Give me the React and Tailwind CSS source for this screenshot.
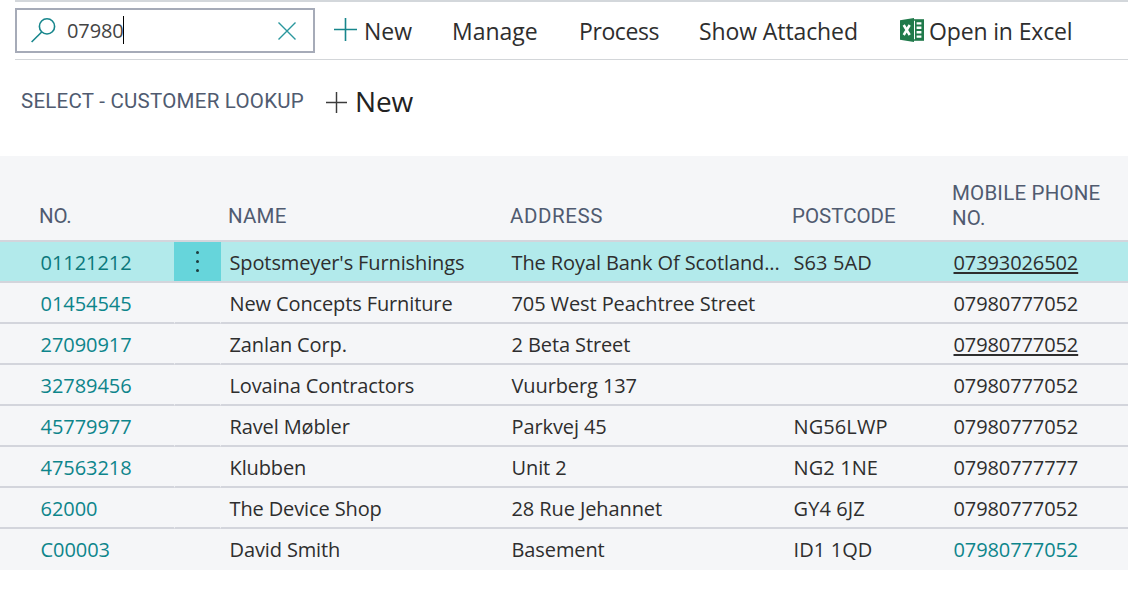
const columns = 'grid grid-cols-[174px_47px_282px_282px_160px_1fr]';

const customers = [
  { no: '01121212', name: "Spotsmeyer's Furnishings", address: 'The Royal Bank Of Scotland...', postcode: 'S63 5AD', phone: '07393026502', underline: true, selected: true },
  { no: '01454545', name: 'New Concepts Furniture', address: '705 West Peachtree Street', postcode: '', phone: '07980777052' },
  { no: '27090917', name: 'Zanlan Corp.', address: '2 Beta Street', postcode: '', phone: '07980777052', underline: true },
  { no: '32789456', name: 'Lovaina Contractors', address: 'Vuurberg 137', postcode: '', phone: '07980777052' },
  { no: '45779977', name: 'Ravel Møbler', address: 'Parkvej 45', postcode: 'NG56LWP', phone: '07980777052' },
  { no: '47563218', name: 'Klubben', address: 'Unit 2', postcode: 'NG2 1NE', phone: '07980777777' },
  { no: '62000', name: 'The Device Shop', address: '28 Rue Jehannet', postcode: 'GY4 6JZ', phone: '07980777052' },
  { no: 'C00003', name: 'David Smith', address: 'Basement', postcode: 'ID1 1QD', phone: '07980777052', link: true },
];

function PlusIcon({ className, size }) {
  return (
    <svg className={className} width={size} height={size} viewBox="0 0 23 23" fill="none" stroke="currentColor" strokeWidth="1.6">
      <path d="M11.5 0v23M0 11.5h23" />
    </svg>
  );
}

function SearchIcon() {
  return (
    <svg className="-mt-px shrink-0 text-[#17868c]" width="26" height="26" viewBox="0 0 26 26" fill="none" stroke="currentColor" strokeWidth="1.6">
      <circle cx="16" cy="9.4" r="7.6" />
      <path d="M10.7 15 0.6 25" />
    </svg>
  );
}

function ExcelIcon() {
  return (
    <svg className="shrink-0" width="24" height="24" viewBox="0 0 24 24">
      <path d="M13 1.2h11v21.6H13z" fill="#217a4b" />
      <path d="M0 2.3 14 0v24L0 21.7z" fill="#217a4b" />
      <path d="M14 2.8h1v18.4h-1z" fill="#fff" />
      <path d="M16.6 4.2h4.8v2.4h-4.8zM16.6 8.6h4.8V11h-4.8zM16.6 13.1h4.8v2.4h-4.8zM16.6 17.5h4.8v2.2h-4.8z" fill="#fff" />
      <path d="m3.7 7 6 10M9.7 7l-6 10" stroke="#fff" strokeWidth="2.5" fill="none" />
    </svg>
  );
}

function Toolbar() {
  return (
    <div className="ml-[15px] flex h-[60px] items-start border-t-2 border-b border-t-[#d3d7db] border-b-[#d3d6d9] text-[23px] leading-[46px] text-[#2e2e2e]">
      <div className="mt-1.5 flex h-[45px] w-[300px] items-center border-2 border-[#a6abb8] pl-3.5">
        <SearchIcon />
        <span className="mt-px ml-2.5 text-[20px] tracking-[-0.1px] text-[#444]">07980</span>
        <span className="-mt-px -ml-px h-7 w-px bg-black" />
        <svg className="ml-[154px] text-[#2a979d]" width="18" height="18" viewBox="0 0 18 18" fill="none" stroke="currentColor" strokeWidth="1.4">
          <path d="m.5.5 17 17M17.5.5l-17 17" />
        </svg>
      </div>
      <div className="mt-1.5 ml-[19px] flex w-[118px] items-center">
        <PlusIcon className="-mt-[3px] text-[#17868c]" size={23} />
        <span className="ml-[7px]">New</span>
      </div>
      <span className="mt-1.5 w-[127px]">Manage</span>
      <span className="mt-1.5 w-[120px] tracking-[-0.4px]">Process</span>
      <span className="mt-1.5 w-[201px] tracking-[-0.1px]">Show Attached</span>
      <div className="mt-1.5 flex items-center">
        <div className="-mt-[3px]"><ExcelIcon /></div>
        <span className="ml-[5px] tracking-[-0.15px] whitespace-nowrap">Open in Excel</span>
      </div>
    </div>
  );
}

function TableHeader() {
  return (
    <div className={`${columns} h-[86px] items-end border-b-2 border-[#d3d5dc] pb-[11px] font-[Roboto] text-[20.5px] leading-[25px] text-[#505b70]`}>
      <span className="pl-[39px] tracking-[-0.2px]">NO.</span>
      <span />
      <span className="pl-[7px] tracking-[0.2px]">NAME</span>
      <span className="pl-[7px] tracking-[0.6px]">ADDRESS</span>
      <span className="pl-[7px]">POSTCODE</span>
      <span className="-mb-0.5 pl-[7px] tracking-[0.2px]">MOBILE PHONE<br />NO.</span>
    </div>
  );
}

function Row({ customer, last }) {
  const { no, name, address, postcode, phone, underline, selected, link } = customer;
  const border = last ? 'h-[41px]' : 'h-[41px] border-b-2 border-[#d3d5dc]';
  return (
    <div className={`${columns} ${selected ? 'bg-[#b2eaeb]' : ''} text-[20px] leading-[41px] whitespace-nowrap text-[#2e2e2e]`}>
      <span className={`${border} pl-[40.5px] tracking-[-0.05px] ${selected ? 'text-[#0b787c]' : 'text-[#0d858b]'}`}>{no}</span>
      <span className={`${border} ${selected ? 'bg-[#66d5db]' : last ? '' : 'border-x border-x-[#f5f6f8]'} flex flex-col items-center justify-center gap-1.5`}>
        {selected && (
          <>
            <i className="size-[3px] rounded-full bg-[#1d3b3d]" />
            <i className="size-[3px] rounded-full bg-[#1d3b3d]" />
            <i className="size-[3px] rounded-full bg-[#1d3b3d]" />
          </>
        )}
      </span>
      <span className={`${border} pl-[8.5px] tracking-[-0.12px]`}>{name}</span>
      <span className={`${border} pl-[8.5px] tracking-[-0.1px]`}>{address}</span>
      <span className={`${border} pl-[8.5px] tracking-[0.1px]`}>{postcode}</span>
      <span className={`${border} pl-[8.5px] tracking-[-0.1px] ${link ? 'text-[#0d858b]' : ''}`}>
        <span className={underline ? 'underline decoration-2 underline-offset-[2px]' : ''}>{phone}</span>
      </span>
    </div>
  );
}

export default function App() {
  return (
    <div className="h-[606px] w-[1128px] overflow-hidden bg-white font-['Open_Sans','Noto_Sans',sans-serif]">
      <Toolbar />
      <div className="flex h-24 items-start pt-[21px] pl-[21px]">
        <h1 className="w-[305px] font-[Roboto] text-[20.5px] leading-10 tracking-[0.25px] text-[#505b70]">SELECT - CUSTOMER LOOKUP</h1>
        <PlusIcon className="mt-[11px] text-[#3c3c3c]" size={21} />
        <span className="ml-2 text-[28px] leading-10 tracking-[-0.2px] text-[#222]">New</span>
      </div>
      <div className="bg-[#f5f6f8]">
        <TableHeader />
        {customers.map((customer, i) => (
          <Row key={customer.no} customer={customer} last={i === customers.length - 1} />
        ))}
      </div>
    </div>
  );
}
